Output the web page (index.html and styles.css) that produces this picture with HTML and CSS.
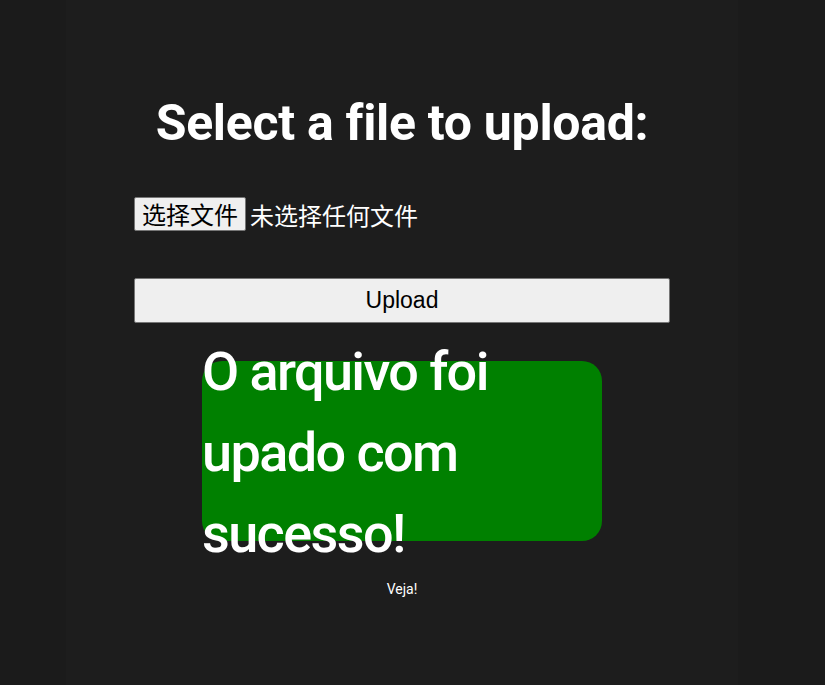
FILE: index.html
```html
<!DOCTYPE html>
<html lang="pt">
<head>
<meta charset="utf-8">
<title>Upload</title>
<link rel="stylesheet" href="styles.css">
</head>
<body>
<main class="page">
  <h1 class="title">Select a file to upload:</h1>
  <form class="form">
    <div class="file-row">
      <button type="button" class="file-btn">选择文件</button>
      <span class="file-status">未选择任何文件</span>
    </div>
    <button type="button" class="upload-btn">Upload</button>
  </form>
  <div class="success">
    <p class="success-text">O arquivo foi upado com sucesso!</p>
  </div>
  <p class="veja">Veja!</p>
</main>
</body>
</html>
```
FILE: styles.css
```css
html, body {
  margin: 0;
  padding: 0;
  height: 100%;
}
body {
  background: #1b1b1b;
  font-family: Roboto, "Noto Sans", sans-serif;
  color: #ffffff;
}
.page {
  margin-left: 66px;
  width: 672px;
  min-height: 100%;
  background: #1d1d1d;
  display: flex;
  flex-direction: column;
  padding-top: 91px;
  box-sizing: border-box;
}
.title {
  margin: 0;
  text-align: center;
  font-size: 50px;
  font-weight: 700;
  letter-spacing: -0.3px;
  line-height: 64px;
}
.form {
  margin: 42px 0 0;
  padding: 0 68px;
  display: flex;
  flex-direction: column;
}
.file-row {
  display: flex;
  align-items: center;
  gap: 4px;
  height: 34px;
}
.file-btn {
  font-family: "Noto Sans CJK SC", sans-serif;
  font-size: 24px;
  line-height: 1;
  height: 34px;
  padding: 0 7px;
  background: #efefef;
  color: #000;
  border: 1px solid #767676;
  border-radius: 2px;
}
.file-status {
  font-family: "Noto Sans CJK SC", sans-serif;
  font-size: 24px;
  color: #fff;
}
.upload-btn {
  margin-top: 47px;
  height: 45px;
  width: 100%;
  background: #efefef;
  color: #000;
  font-family: "Liberation Sans", Arial, sans-serif;
  font-size: 23px;
  border: 1px solid #767676;
  border-radius: 2px;
}
.success {
  margin: 38px auto 0;
  width: 400px;
  height: 180px;
  background: #008000;
  border-radius: 20px;
}
.success-text {
  margin: -30px 0 0;
  font-size: 54px;
  letter-spacing: -1.6px;
  line-height: 81px;
  font-weight: 500;
  color: #fff;
}
.veja {
  margin: 40px 0 0;
  text-align: center;
  font-size: 14px;
}
```
